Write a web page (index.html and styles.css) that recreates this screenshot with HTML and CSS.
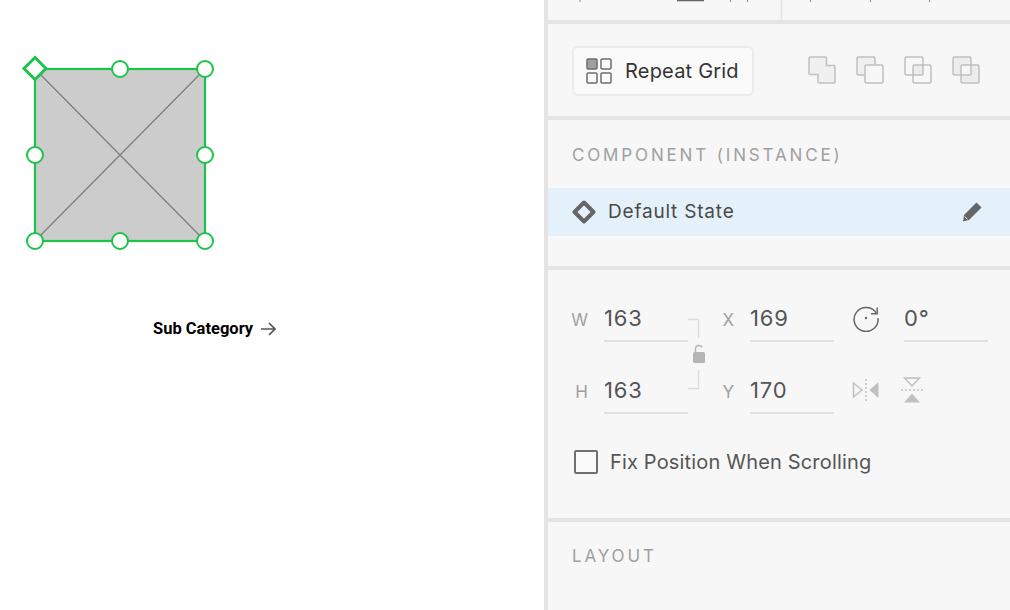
FILE: index.html

```html
<!DOCTYPE html>
<html lang="en">
<head>
  <meta charset="UTF-8">
  <title>Component Instance</title>
  <link rel="stylesheet" href="styles.css">
</head>
<body>
  <div class="app">
    <div class="canvas">
      <svg class="selection" width="240" height="260" viewBox="0 0 240 260">
        <rect x="35" y="69" width="170" height="172" fill="#cccccc"/>
        <path d="M35 69L205 241M205 69L35 241" stroke="#808080" stroke-width="1.300" fill="none"/>
        <rect x="35" y="69" width="170" height="172" fill="none" stroke="#1dc34b" stroke-width="2.200"/>
        <g fill="#fff" stroke="#1dc34b" stroke-width="2">
          <circle cx="120" cy="69" r="8"/>
          <circle cx="205" cy="69" r="8"/>
          <circle cx="35" cy="155" r="8"/>
          <circle cx="205" cy="155" r="8"/>
          <circle cx="35" cy="241" r="8"/>
          <circle cx="120" cy="241" r="8"/>
          <circle cx="205" cy="241" r="8"/>
          <path d="M35 57.500L46 68.500L35 79.500L24 68.500Z" stroke-width="3"/>
        </g>
      </svg>
      <div class="sub-link">
        <span>Sub Category</span>
        <svg width="16" height="14" viewBox="0 0 16 14"><path d="M1 7H15M9 1L15 7L9 13" fill="none" stroke="#555" stroke-width="1.700"/></svg>
      </div>
    </div>

    <div class="panel">
      <section class="section top-stub">
        <svg width="462" height="20" viewBox="0 0 462 20">
          <path d="M129 0.500H156" stroke="#666" stroke-width="1.500"/>
          <path d="M182.500 0V2M199.500 0V2M262.500 0V2M322.500 0V2M381.500 0V2M32 0V2" stroke="#888" stroke-width="1"/>
          <path d="M233.500 0V20" stroke="#e2e2e2" stroke-width="1.500"/>
        </svg>
      </section>

      <section class="section actions">
        <button class="repeat-btn">
          <svg width="26" height="26" viewBox="0 0 26 26">
            <rect x="1" y="1" width="10" height="10" rx="1" fill="#a0a0a0" stroke="#6e6e6e" stroke-width="1.500"/>
            <rect x="15" y="1" width="10" height="10" rx="1" fill="none" stroke="#6e6e6e" stroke-width="1.500"/>
            <rect x="1" y="15" width="10" height="10" rx="1" fill="none" stroke="#6e6e6e" stroke-width="1.500"/>
            <rect x="15" y="15" width="10" height="10" rx="1" fill="none" stroke="#6e6e6e" stroke-width="1.500"/>
          </svg>
          <span>Repeat Grid</span>
        </button>
        <div class="bool-icons">
          <svg width="28" height="28" viewBox="0 0 28 28">
            <path d="M2.500 1H17.500Q18.500 1 18.500 2V9.500H26Q27 9.500 27 10.500V26Q27 27 26 27H11Q10 27 10 26V18.500H2.500Q1 18.500 1 17.500V2Q1 1 2.500 1Z" fill="#f0f0f0" stroke="#c0c0c0" stroke-width="1.500"/>
          </svg>
          <svg width="28" height="28" viewBox="0 0 28 28">
            <rect x="1" y="1" width="18" height="18" rx="1.500" fill="#f0f0f0" stroke="#c0c0c0" stroke-width="1.500"/>
            <rect x="9" y="9" width="18" height="18" rx="1.500" fill="#f7f7f7" stroke="#c0c0c0" stroke-width="1.500"/>
          </svg>
          <svg width="28" height="28" viewBox="0 0 28 28">
            <rect x="9" y="9" width="10" height="10" fill="#ececec"/>
            <rect x="1" y="1" width="18" height="18" rx="1.500" fill="none" stroke="#c0c0c0" stroke-width="1.500"/>
            <rect x="9" y="9" width="18" height="18" rx="1.500" fill="none" stroke="#c0c0c0" stroke-width="1.500"/>
          </svg>
          <svg width="28" height="28" viewBox="0 0 28 28">
            <path d="M1 1H19V9H9V19H1ZM19 9H27V27H9V19H19Z" fill="#ececec"/>
            <rect x="1" y="1" width="18" height="18" rx="1.500" fill="none" stroke="#c0c0c0" stroke-width="1.500"/>
            <rect x="9" y="9" width="18" height="18" rx="1.500" fill="none" stroke="#c0c0c0" stroke-width="1.500"/>
          </svg>
        </div>
      </section>

      <section class="section component">
        <h2 class="section-title">COMPONENT (INSTANCE)</h2>
        <div class="state-row">
          <svg width="24" height="24" viewBox="0 0 24 24"><path d="M12 2.500L21.500 12L12 21.500L2.500 12Z" fill="none" stroke="#666" stroke-width="4" stroke-linejoin="round"/></svg>
          <span class="state-name">Default State</span>
          <svg class="pencil" width="22" height="22" viewBox="0 0 22 22"><path d="M15.500 1.500L20.500 6.500L8 19L2 20.500L3 14Z" fill="#666"/><path d="M3.700 15.500L6.500 18.300" stroke="#e5f1fa" stroke-width="1"/></svg>
        </div>
      </section>

      <section class="section transform">
        <div class="xform-grid">
          <span class="axis">W</span>
          <span class="num">163</span>
          <svg class="link" width="24" height="72" viewBox="0 0 24 72">
            <path d="M0 1.500H10.500V20M10.500 52V70.500H0" fill="none" stroke="#dcdcdc" stroke-width="1.500"/>
            <path d="M7.500 34V31Q7.500 27.500 11 27.500Q13.500 27.500 14 29.500" fill="none" stroke="#b5b5b5" stroke-width="1.500"/>
            <rect x="5" y="34" width="12" height="11" rx="1.500" fill="#b5b5b5"/>
          </svg>
          <span class="axis">X</span>
          <span class="num">169</span>
          <svg class="tool" width="28" height="28" viewBox="0 0 28 28">
            <path d="M24.500 9.500A12 12 0 1 0 26 14" fill="none" stroke="#666" stroke-width="1.500"/>
            <path d="M19 9.800H25.200V3.500" fill="none" stroke="#666" stroke-width="1.500"/>
            <circle cx="14" cy="14" r="1.200" fill="#666"/>
          </svg>
          <span class="num">0°</span>

          <span class="axis">H</span>
          <span class="num">163</span>
          <span class="axis">Y</span>
          <span class="num">170</span>
          <svg class="tool" width="28" height="24" viewBox="0 0 28 24">
            <path d="M1.500 5L10 12L1.500 19Z" fill="none" stroke="#c0c0c0" stroke-width="1.500"/>
            <path d="M14 1V23" stroke="#c0c0c0" stroke-width="1.500" stroke-dasharray="2 2"/>
            <path d="M26.500 4V20L17.500 12Z" fill="#c0c0c0"/>
          </svg>
          <svg class="tool flip-v" width="24" height="28" viewBox="0 0 24 28">
            <path d="M4.500 2H19.500L12 10Z" fill="none" stroke="#c0c0c0" stroke-width="1.500"/>
            <path d="M1 14H23" stroke="#c0c0c0" stroke-width="1.500" stroke-dasharray="2 2"/>
            <path d="M4 26.500H20L12 17.500Z" fill="#c0c0c0"/>
          </svg>
        </div>
        <label class="check-row">
          <span class="check-box"></span>
          <span>Fix Position When Scrolling</span>
        </label>
      </section>

      <section class="section layout">
        <h2 class="section-title">LAYOUT</h2>
      </section>
    </div>
  </div>
</body>
</html>
```

FILE: styles.css

```css
html, body {
  margin: 0;
  height: 100%;
  overflow: hidden;
  background: #fff;
}
.app {
  display: flex;
  height: 610px;
  font-family: Inter, "Noto Sans", sans-serif;
}
.canvas {
  position: relative;
  width: 544px;
  flex-shrink: 0;
  background: #fff;
}
.selection {
  position: absolute;
  left: 0;
  top: 0;
}
.sub-link {
  position: absolute;
  left: 153px;
  top: 319px;
  display: flex;
  align-items: center;
  gap: 7px;
  height: 19px;
  font-family: Roboto, sans-serif;
  font-weight: 700;
  font-size: 16.500px;
  color: #000;
}
.panel {
  flex: 1;
  display: flex;
  flex-direction: column;
  background: #f7f7f7;
  border-left: 4px solid #e4e4e4;
}
.section {
  border-bottom: 4px solid #e4e4e4;
}
.top-stub {
  height: 20px;
}
.top-stub svg {
  display: block;
}
.actions {
  height: 92px;
  display: flex;
  align-items: center;
  padding-left: 24px;
}
.repeat-btn {
  display: flex;
  align-items: center;
  gap: 13px;
  width: 182px;
  height: 50px;
  margin-top: 1px;
  padding: 0 0 0 12px;
  box-sizing: border-box;
  background: #fafafa;
  border: 2px solid #ebebeb;
  border-radius: 6px;
  font-family: inherit;
  font-size: 20px;
  letter-spacing: 0.2px;
  color: #333;
}
.bool-icons {
  display: flex;
  gap: 20px;
  margin-left: 54px;
}
.section-title {
  margin: 0;
  font-size: 17px;
  font-weight: 400;
  letter-spacing: 2.850px;
  color: #a0a0a0;
  line-height: 22px;
}
.component {
  height: 122px;
  padding-top: 24px;
}
.component .section-title {
  padding-left: 24px;
}
.state-row {
  display: flex;
  align-items: center;
  height: 48px;
  margin-top: 22px;
  padding: 0 27px 0 24px;
  background: #e5f1fa;
  font-size: 19px;
  letter-spacing: 0.8px;
  color: #4a4a4a;
}
.state-name {
  margin-left: 12px;
  margin-top: -2px;
}
.pencil {
  margin-left: auto;
}
.transform {
  height: 248px;
  padding-left: 16px;
}
.xform-grid {
  display: grid;
  grid-template-columns: 40px 84px 34px 28px 84px 70px 84px;
  grid-template-rows: 48px 48px;
  row-gap: 24px;
  padding-top: 24px;
  align-items: end;
}
.axis {
  font-size: 17px;
  color: #a0a0a0;
  text-align: right;
  padding-right: 16px;
  align-self: center;
  margin-top: 4px;
}
.num {
  height: 47px;
  line-height: 46px;
  box-sizing: border-box;
  border-bottom: 2px solid #e2e2e2;
  font-size: 22px;
  letter-spacing: 0.8px;
  color: #555;
}
.link {
  grid-column: 3;
  grid-row: 1 / span 2;
  align-self: start;
  margin-top: 24px;
}
.tool {
  justify-self: start;
  align-self: center;
  margin-left: 18px;
}
.flip-v {
  grid-column: 7;
  margin-left: -4px;
}
.check-row {
  display: flex;
  align-items: center;
  gap: 12px;
  margin: 36px 0 0 10px;
  font-size: 20px;
  letter-spacing: 0.170px;
  color: #555;
}
.check-box {
  width: 20px;
  height: 20px;
  border: 2px solid #707070;
  border-radius: 2px;
  background: #fafafa;
}
.layout {
  flex: 1;
  border-bottom: 0;
  padding: 23px 0 0 24px;
}
```
